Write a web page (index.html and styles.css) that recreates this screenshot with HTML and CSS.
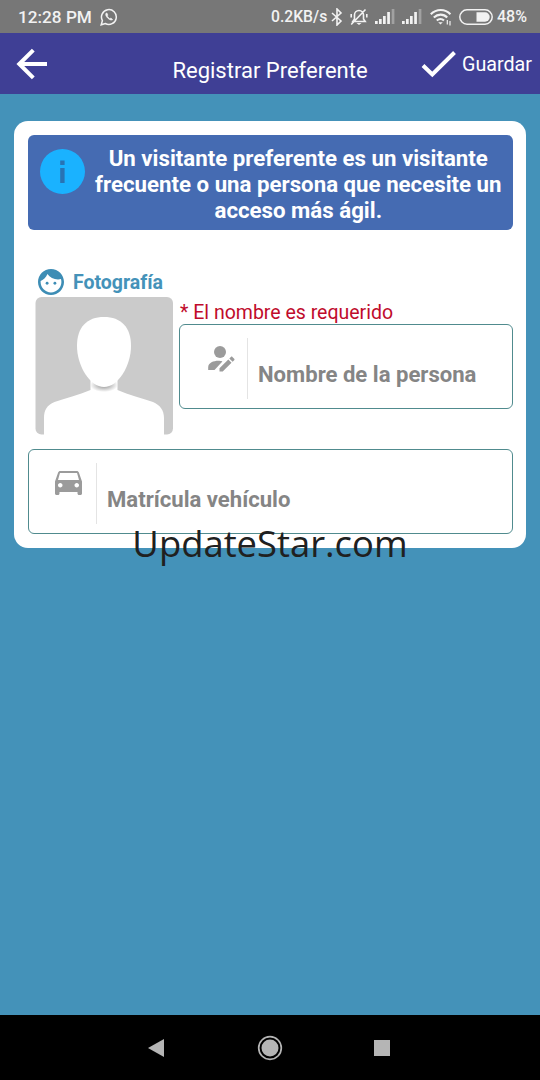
FILE: index.html
```html
<!DOCTYPE html>
<html lang="es">
<head>
    <meta charset="UTF-8">
    <meta name="viewport" content="width=device-width, initial-scale=1.0">
    <title>Registrar Preferente</title>
    <link rel="stylesheet" href="styles.css">
</head>
<body>
    <div class="status-bar">
        <span class="time">12:28 PM</span>
        <svg class="whatsapp" width="18" height="18" viewBox="0 0 18 18" fill="none" stroke="#f2f2f2">
            <path d="M1.2 16.8l1.2-4.2a7.4 7.4 0 1 1 2.9 2.9z" stroke-width="1.5"/>
            <path d="M6 5.2c-.9 1.3.1 3.4 1.8 5s3.7 2.4 4.9 1.4l-1.8-1.5-1.1.7C8.7 10 8 9.3 7.3 8.1l.6-1L6.9 5z" fill="#f2f2f2" stroke-width=".6"/>
        </svg>
        <div class="status-right">
            <span class="speed">0.2KB/s</span>
            <svg class="bluetooth" width="12" height="18" viewBox="0 0 12 18" fill="none" stroke="#f2f2f2" stroke-width="1.6">
                <path d="M1 5l9 8-4 4V1l4 4-9 8"/>
            </svg>
            <svg class="bell" width="18" height="18" viewBox="0 0 18 18" fill="none" stroke="#f2f2f2" stroke-width="1.6">
                <path d="M2.8 13.5h12.4L13.5 11V7a4.5 4.5 0 0 0-9 0v4zM1.2 16.5L15.5 1.5M1.2 6v3.5M16.8 6v3.5"/>
                <path d="M6.5 15h5L9 17z" fill="#f2f2f2" stroke="none"/>
            </svg>
            <svg class="signal" width="20" height="16" viewBox="0 0 20 16" fill="#f2f2f2">
                <path d="M0 13h2.7v3H0zM4 11h2.7v5H4zM8 8h2.7v8H8zM12.2 4h2.7v12h-2.7z"/>
                <path d="M16.7 1h2.7v15h-2.7z" opacity=".35"/>
            </svg>
            <svg class="signal" width="20" height="16" viewBox="0 0 20 16" fill="#f2f2f2">
                <path d="M0 13h2.7v3H0zM4 11h2.7v5H4zM8 8h2.7v8H8zM12.2 4h2.7v12h-2.7z"/>
                <path d="M16.7 1h2.7v15h-2.7z" opacity=".35"/>
            </svg>
            <svg class="wifi" width="22" height="18" viewBox="0 0 22 18" fill="none" stroke="#f2f2f2" stroke-width="2.1">
                <path d="M.8 6.2c5.5-5.6 14.4-5.6 19.6 0M3.8 9.5c4-3.9 9.8-3.9 13.4 0M6.8 12.5c2.2-2 5.2-2 7.2 0"/>
                <path d="M8.2 14.2h4.6l-2.3 2.3z" fill="#f2f2f2" stroke="none"/>
                <path d="M17.3 12v4.5M20 13v4.5" stroke-width="1.2"/>
            </svg>
            <svg class="battery" width="34" height="16" viewBox="0 0 34 16">
                <rect x=".8" y=".8" width="32.4" height="14.4" rx="7.2" fill="none" stroke="#f2f2f2" stroke-width="1.5"/>
                <path d="M17.5 3.3H26a4.700 4.700 0 0 1 0 9.400h-8.500z" fill="#f2f2f2"/>
            </svg>
            <span class="percent">48%</span>
        </div>
    </div>

    <header class="app-bar">
        <svg class="back" width="32" height="32" viewBox="0 0 32 32" fill="none" stroke="#fff" stroke-width="4">
            <path d="M31 16H4M17.3 2.2L3.3 16l14 13.8"/>
        </svg>
        <h1>Registrar Preferente</h1>
        <button class="save-button">
            <svg width="36" height="28" viewBox="0 0 36 28" fill="none" stroke="#fff" stroke-width="4">
                <path d="M2 15.5l9.3 9L33.5 2.5"/>
            </svg>
            <span>Guardar</span>
        </button>
    </header>

    <main>
        <div class="card">
            <div class="info">
                <svg width="46" height="46" viewBox="0 0 46 46">
                    <circle cx="22.5" cy="22.5" r="22.5" fill="#1ab2ff"/>
                    <path d="M20.2 11.5h4.400v4.500h-4.400zM20.2 19h4.400v15h-4.400z" fill="#2873b4"/>
                </svg>
                <p>Un visitante preferente es un visitante<br>frecuente o una persona que necesite un<br>acceso más ágil.</p>
            </div>

            <div class="person">
                <div class="photo">
                    <div class="photo-label">
                        <svg width="26" height="26" viewBox="2 2 20 20" fill="#3d8db5">
                            <path d="M12 2C6.48 2 2 6.48 2 12s4.48 10 10 10 10-4.48 10-10S17.52 2 12 2zm0 18c-4.41 0-8-3.59-8-8 0-.29.02-.58.05-.86 2.36-1.05 4.23-2.98 5.21-5.37C11.07 8.33 14.05 10 17.42 10c.78 0 1.53-.09 2.25-.26.21.71.33 1.47.33 2.26 0 4.41-3.59 8-8 8z"/>
                            <circle cx="9" cy="13" r="1.1"/>
                            <circle cx="15" cy="13" r="1.1"/>
                        </svg>
                        Fotografía
                    </div>
                    <svg class="avatar" width="138" height="138" viewBox="0 0 138 138">
                        <defs>
                            <radialGradient id="neck" gradientUnits="userSpaceOnUse" cx="69" cy="88" r="14" gradientTransform="matrix(1 0 0 .5 0 44)">
                                <stop offset="0" stop-color="#8c8c8c"/>
                                <stop offset="1" stop-color="#fff"/>
                            </radialGradient>
                        </defs>
                        <rect x=".5" width="137.5" height="137.5" rx="6" fill="#cbcbcb"/>
                        <path d="M55.5 79v14c-12 5-25 8-36 12C12 108 9 113 9 121v17h120v-17c0-8-4-13-11-16-11-4-24-7-35.5-12V79z" fill="#fff"/>
                        <path d="M56 82h26v13H56z" fill="url(#neck)"/>
                        <path d="M69 20c17 0 27 10 27 29 0 20-13 41-27 41S42 69 42 49c0-19 10-29 27-29z" fill="#fff"/>
                    </svg>
                </div>
                <div class="name">
                    <p class="error">* El nombre es requerido</p>
                    <div class="field">
                        <span class="field-icon">
                            <svg width="27" height="26" viewBox="0 0 27 26" fill="#9b9b9b">
                                <circle cx="12" cy="6" r="6"/>
                                <path d="M.2 24v-3c0-4.200 5.500-6.200 10-6.200 1.800 0 2.800.2 4.200.6L6.500 24z"/>
                                <path d="M11.500 25.500v-3.200l8.800-8.800 3.200 3.200-8.800 8.800zM21.300 12.500l1.600-1.600c.5-.5 1-.5 1.500 0l1.800 1.800c.5.5.5 1 0 1.500l-1.600 1.600z"/>
                            </svg>
                        </span>
                        <span class="placeholder">Nombre de la persona</span>
                    </div>
                </div>
            </div>

            <div class="field vehicle">
                <span class="field-icon">
                    <svg width="27" height="24" viewBox="3 5 18 16" fill="#9b9b9b">
                        <path d="M18.92 6.01C18.72 5.42 18.16 5 17.5 5h-11c-.66 0-1.21.42-1.42 1.01L3 12v8c0 .55.45 1 1 1h1c.55 0 1-.45 1-1v-1h12v1c0 .55.45 1 1 1h1c.55 0 1-.45 1-1v-8l-2.08-5.99zM6.500 16c-.83 0-1.500-.67-1.500-1.500S5.670 13 6.500 13s1.500.67 1.500 1.500S7.330 16 6.500 16zm11 0c-.83 0-1.500-.67-1.500-1.500s.67-1.500 1.500-1.500 1.500.67 1.500 1.500-.67 1.500-1.500 1.500zM5 11l1.300-4.700h11.400L19 11H5z"/>
                    </svg>
                </span>
                <span class="placeholder">Matrícula vehículo</span>
            </div>
        </div>
        <div class="watermark">UpdateStar.com</div>
    </main>

    <nav class="nav-bar">
        <svg width="16" height="18" viewBox="0 0 16 18" fill="#b5b5b5"><path d="M0 9L16 0v18z"/></svg>
        <svg class="home" width="26" height="26" viewBox="0 0 26 26">
            <circle cx="13" cy="13" r="11.3" fill="none" stroke="#b5b5b5" stroke-width="1.7"/>
            <circle cx="13" cy="13" r="8.5" fill="#b5b5b5"/>
        </svg>
        <svg width="16" height="16" viewBox="0 0 16 16" fill="#b5b5b5"><path d="M0 0h16v16H0z"/></svg>
    </nav>
</body>
</html>
```
FILE: styles.css
```css
* {
    margin: 0;
    padding: 0;
    box-sizing: border-box;
}

body {
    display: flex;
    flex-direction: column;
    height: 1080px;
    font-family: Roboto, sans-serif;
    background-color: #4492b9;
    white-space: nowrap;
    overflow: hidden;
}

svg {
    display: block;
    flex-shrink: 0;
}

.status-bar {
    display: flex;
    align-items: center;
    height: 33px;
    padding: 0 14px 0 18px;
    background-color: #777;
    color: #f2f2f2;
    font-size: 16px;
    font-weight: 500;
}

.time {
    width: 82px;
    font-size: 17.2px;
}

.status-right {
    display: flex;
    align-items: center;
    margin-left: auto;
}

.speed {
    font-size: 15.7px;
    width: 60px;
}

.bell {
    margin-left: 7px;
}

.signal {
    margin: 0 0 1px 7px;
}

.wifi {
    margin-left: 8px;
}

.battery {
    margin: 0 4px 0 7px;
}

.percent {
    font-size: 16px;
    width: 29px;
}

.app-bar {
    display: grid;
    grid-template-columns: 1fr auto 1fr;
    align-items: center;
    height: 61px;
    padding: 0 8px;
    background-color: #3f3f95;
    color: white;
}

.back {
    margin-left: 8px;
}

.app-bar h1 {
    padding-top: 14px;
    font-size: 22px;
    font-weight: 400;
}

.save-button {
    display: flex;
    align-items: center;
    justify-self: end;
    gap: 5px;
    border: none;
    background: none;
    color: white;
    font-family: inherit;
    font-size: 19.7px;
}

.save-button span {
    padding-top: 2px;
}

main {
    position: relative;
    flex: 1;
    padding: 27px 14px;
}

.card {
    height: 427px;
    padding: 14px 13px 14px 14px;
    border-radius: 14px;
    background-color: white;
}

.info {
    display: flex;
    height: 95px;
    padding: 10px 12px;
    border-radius: 6px;
    background-color: #456bb2;
    color: white;
}

.info svg {
    margin-top: 4px;
}

.info p {
    flex: 1;
    margin-left: 9px;
    font-size: 22.25px;
    font-weight: 700;
    line-height: 26px;
    text-align: center;
}

.person {
    display: flex;
    gap: 6px;
    height: 180px;
    margin-top: 39px;
    padding-left: 7px;
}

.photo-label {
    display: flex;
    align-items: center;
    gap: 9px;
    height: 28px;
    padding: 0 0 2px 3px;
    color: #4492b9;
    font-size: 19.5px;
    font-weight: 700;
}

.name {
    flex: 1;
    padding-top: 31px;
}

.error {
    height: 24px;
    padding-left: 1px;
    color: #c00b2b;
    font-size: 19.5px;
    line-height: 26px;
}

.field {
    display: flex;
    height: 85px;
    padding: 13px 0 9px;
    border: 1.5px solid #508b8e;
    border-radius: 6px;
}

.field-icon {
    width: 68px;
    padding: 8px 0 0 28px;
    border-right: 1px solid #e4e4e4;
}

.vehicle .field-icon {
    padding-left: 26px;
}

.placeholder {
    margin: 22px 0 0 10px;
    color: #858585;
    font-size: 22.1px;
    font-weight: 700;
    line-height: 28px;
}

.watermark {
    position: absolute;
    top: 424px;
    left: 0;
    width: 100%;
    color: #202020;
    font-family: "Open Sans", sans-serif;
    font-size: 36.4px;
    line-height: 50px;
    text-align: center;
}

.nav-bar {
    display: flex;
    align-items: center;
    justify-content: space-between;
    height: 65px;
    padding: 0 150px 0 148px;
    background-color: black;
}

.home {
    margin-left: 2px;
}
```
